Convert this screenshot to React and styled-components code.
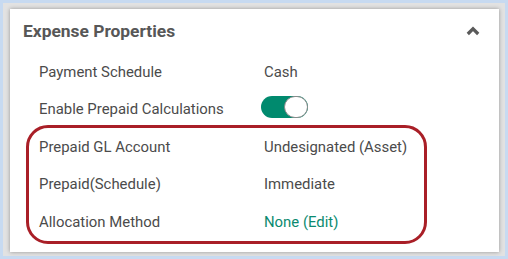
import React from 'react'
import styled, { createGlobalStyle } from 'styled-components'

const GlobalStyle = createGlobalStyle`
  html, body {
    margin: 0;
    padding: 0;
    background: #c7daf1;
  }
  body {
    font-family: Roboto, "Liberation Sans", sans-serif;
  }
`

const Frame = styled.div`
  box-sizing: border-box;
  margin: 3px;
  width: 502px;
  height: 253px;
  padding: 6px 6px 4px 7px;
  background: #e2e2e2;
`

const Panel = styled.div`
  box-sizing: border-box;
  height: 100%;
  background: #fff;
  box-shadow: 0 0 4px rgba(0, 0, 0, 0.35);
  display: flex;
  flex-direction: column;
`

const Header = styled.div`
  height: 44px;
  display: flex;
  align-items: center;
  justify-content: space-between;
  padding: 0 19px 0 13px;
`

const Title = styled.h2`
  margin: 0;
  font-size: 17.4px;
  font-weight: 700;
  color: #575757;
`

const Chevron = styled.svg`
  width: 14px;
  height: 10px;
  margin-top: -1px;
`

const Rows = styled.div`
  display: flex;
  flex-direction: column;
  padding-left: 16px;
`

const Row = styled.div`
  display: grid;
  grid-template-columns: 225px 1fr;
  align-items: center;
  height: 37.5px;
  padding-left: ${(p) => (p.inset ? '10px' : '13px')};
  font-size: 14.9px;
  color: #4b4b4b;
`

const Value = styled.span`
  color: ${(p) => (p.link ? '#0b8a70' : '#4b4b4b')};
  cursor: ${(p) => (p.link ? 'pointer' : 'default')};
`

const Highlight = styled.div`
  width: 401px;
  margin-top: -3px;
  box-sizing: border-box;
  border: 3px solid #a91f27;
  border-radius: 22px;
  display: flex;
  flex-direction: column;
`

const Toggle = styled.div`
  position: relative;
  box-sizing: border-box;
  width: 47px;
  height: 22px;
  margin: -4px 0 0 -3px;
  border-radius: 11px;
  background: #008a6e;
`

const Knob = styled.div`
  position: absolute;
  right: 0;
  top: 0;
  box-sizing: border-box;
  width: 24px;
  height: 22px;
  border-radius: 11px;
  background: #fff;
  border: 1px solid #8a8a8a;
`

export default function App() {
  return (
    <>
      <GlobalStyle />
      <Frame>
        <Panel>
          <Header>
            <Title>Expense Properties</Title>
            <Chevron viewBox="0 0 14 10">
              <polyline points="1.8,8 7,2.8 12.2,8" fill="none" stroke="#5a5a5a" strokeWidth="3.2" />
            </Chevron>
          </Header>
          <Rows>
            <Row>
              <span>Payment Schedule</span>
              <Value>Cash</Value>
            </Row>
            <Row>
              <span>Enable Prepaid Calculations</span>
              <Toggle>
                <Knob />
              </Toggle>
            </Row>
            <Highlight>
              <Row inset>
                <span>Prepaid GL Account</span>
                <Value>Undesignated (Asset)</Value>
              </Row>
              <Row inset>
                <span>Prepaid(Schedule)</span>
                <Value>Immediate</Value>
              </Row>
              <Row inset>
                <span>Allocation Method</span>
                <Value link>None (Edit)</Value>
              </Row>
            </Highlight>
          </Rows>
        </Panel>
      </Frame>
    </>
  )
}
